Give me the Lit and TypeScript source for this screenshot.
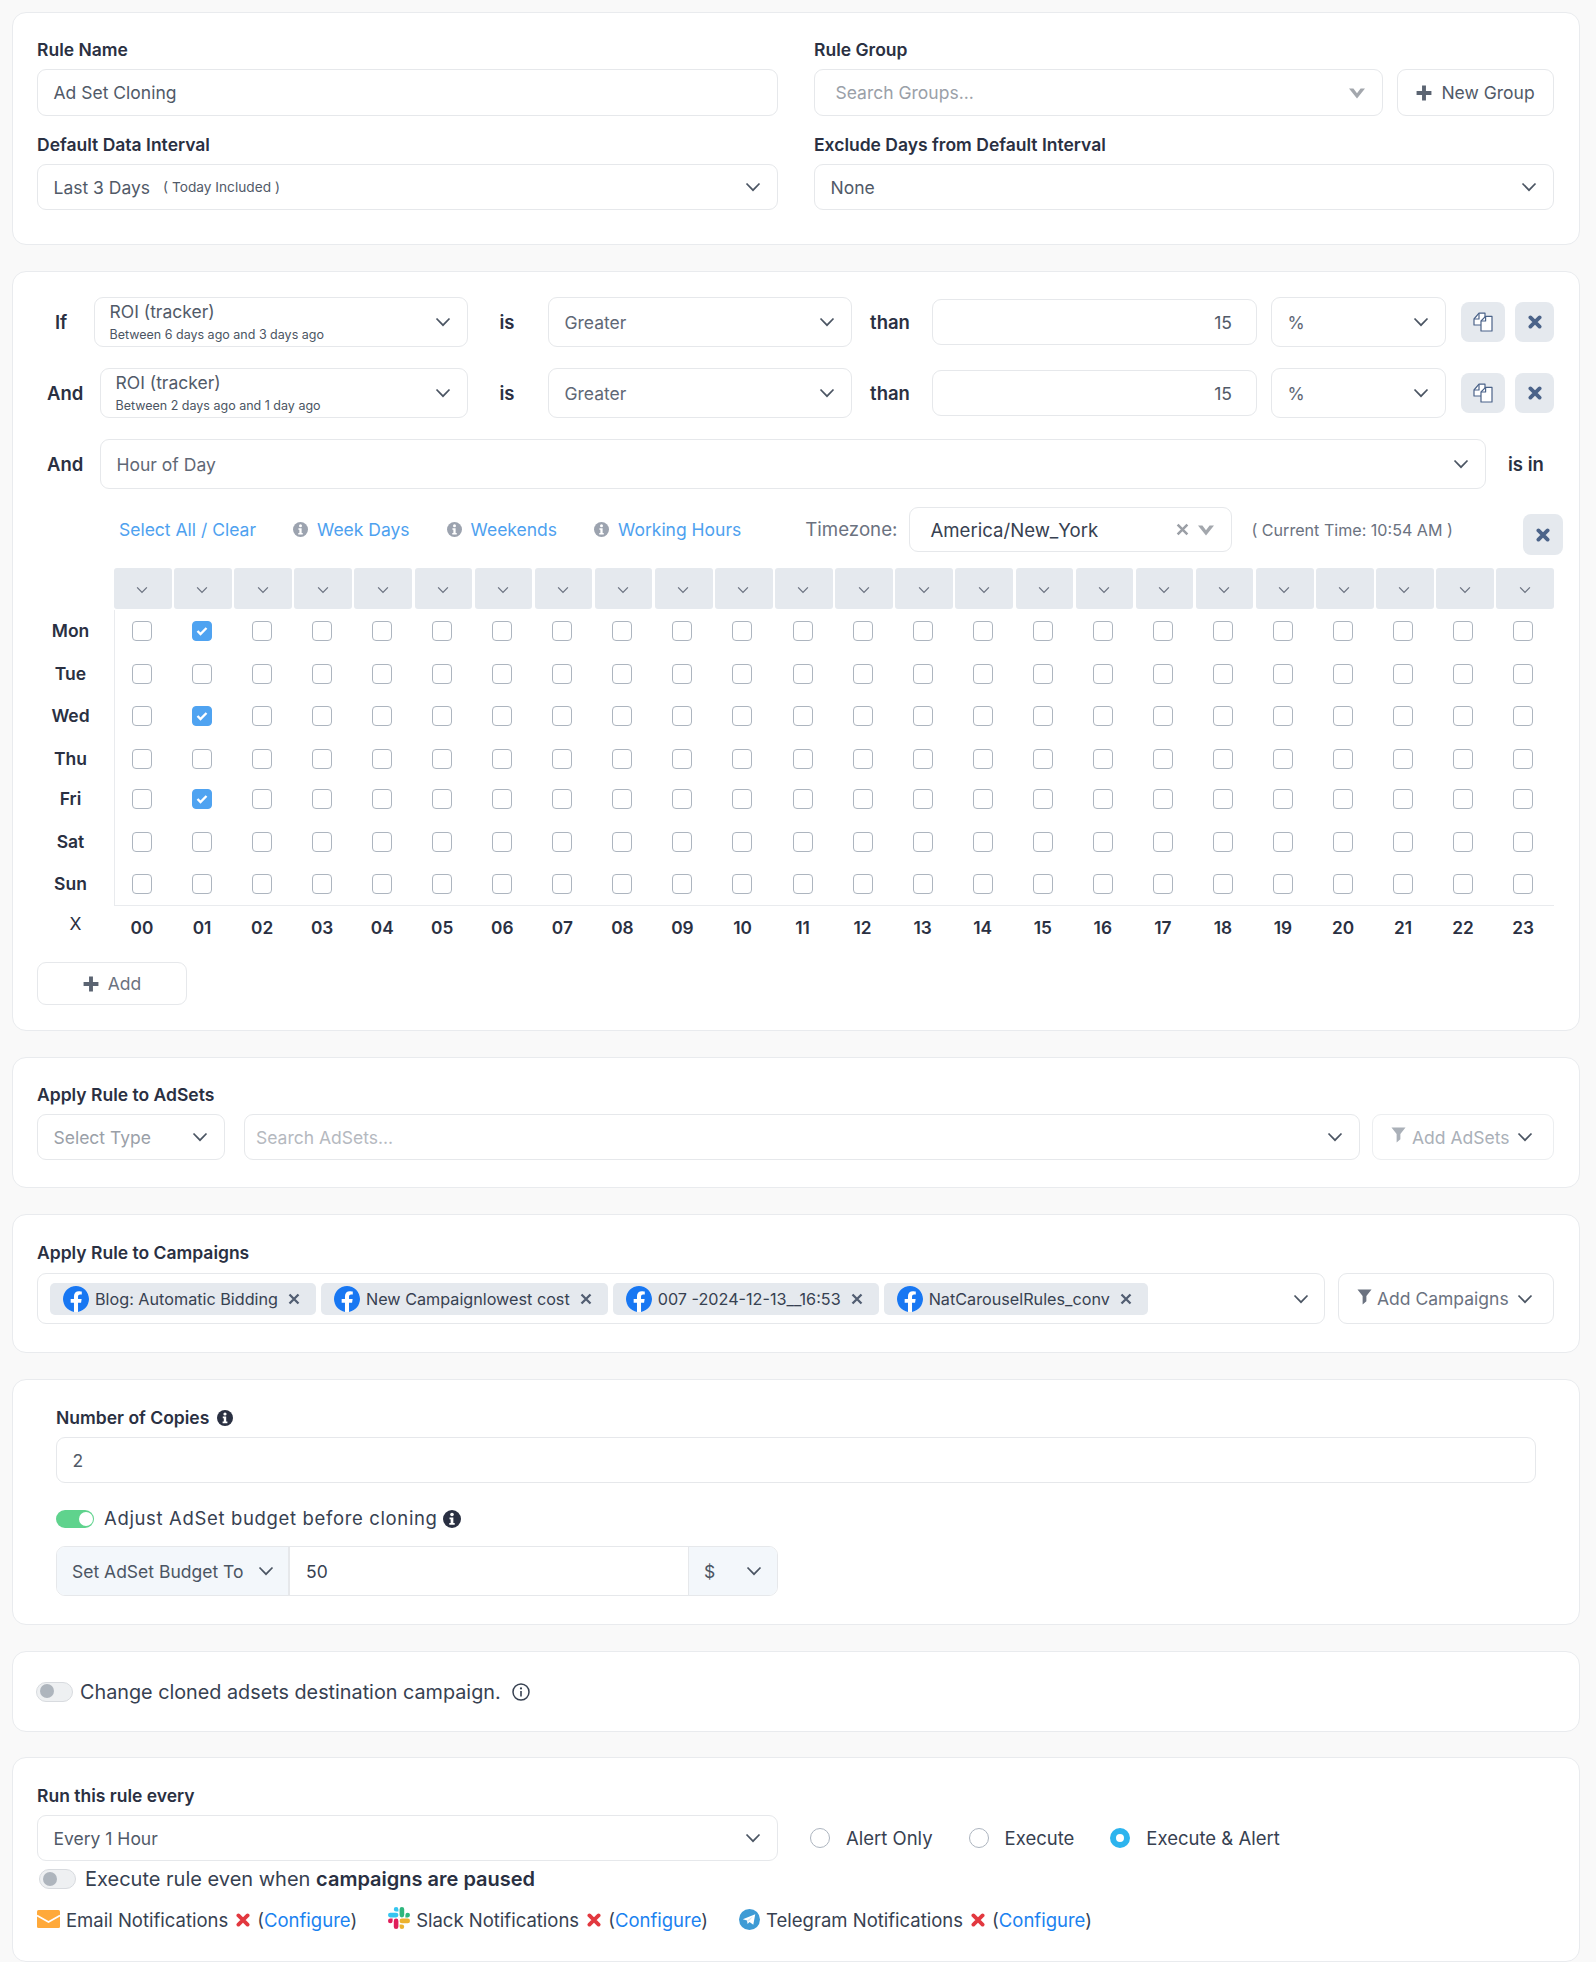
import { LitElement, html, css } from "lit";
import { customElement } from "lit/decorators.js";

const chev = (cls = "") => html`<svg class="chev ${cls}" viewBox="0 0 16 10"><path d="M1.5 1.5 8 8.2l6.5-6.7" fill="none" stroke="currentColor" stroke-width="1.7"/></svg>`;
const fatChev = () => html`<svg class="fat" viewBox="0 0 18 12"><path d="M1 1.5h4.4L9 6.2l3.6-4.7H17L9 11.5z" fill="currentColor"/></svg>`;
const plus = () => html`<svg class="plus" viewBox="0 0 14 14"><path d="M7 .5v13M.5 7h13" stroke="currentColor" stroke-width="3.4" fill="none"/></svg>`;
const info = (cls = "") => html`<svg class="info ${cls}" viewBox="0 0 16 16"><circle cx="8" cy="8" r="8" fill="currentColor"/><circle cx="8" cy="4" r="1.6" fill="#fff"/><path d="M5.8 6.6h3.4v5h1.2v1.6H5.6v-1.6h1.2V8.2h-1z" fill="#fff"/></svg>`;
const times = (cls = "") => html`<svg class="times ${cls}" viewBox="0 0 14 14"><path d="M2.4 2.4l9.2 9.2M11.6 2.4l-9.2 9.2" stroke="currentColor" stroke-width="3.8" stroke-linecap="round" fill="none"/></svg>`;
const thin = () => html`<svg class="thin" viewBox="0 0 12 12"><path d="M1.5 1.5l9 9M10.5 1.5l-9 9" stroke="currentColor" stroke-width="2.3" fill="none"/></svg>`;
const filter = () => html`<svg class="filter" viewBox="0 0 16 17"><path d="M.5.5h15L10 7.5V13l-4 3.5V7.5z" fill="currentColor"/></svg>`;
const copy = () => html`<svg class="copy" viewBox="0 0 20 20" fill="#fff" stroke="currentColor" stroke-width="1.2" stroke-linejoin="round"><path d="M1 7 6 1.2h6V13H1z"/><path d="M6 1.2V7H1" fill="none"/><path d="M8 9l4.6-4.6H19V19H8z"/><path d="M12.6 4.4V9H8" fill="none"/></svg>`;
const fb = () => html`<svg class="fb" viewBox="0 0 24 24"><circle cx="12" cy="12" r="12" fill="#fff"/><path fill="#1877f2" d="M24 12.073c0-6.627-5.373-12-12-12s-12 5.373-12 12c0 5.99 4.388 10.954 10.125 11.854v-8.385H7.078v-3.47h3.047V9.43c0-3.007 1.792-4.669 4.533-4.669 1.312 0 2.686.235 2.686.235v2.953H15.83c-1.491 0-1.956.925-1.956 1.874v2.25h3.328l-.532 3.47h-2.796v8.385C19.612 23.027 24 18.062 24 12.073z"/></svg>`;
const mail = () => html`<svg class="mail" viewBox="0 0 23 18"><rect width="23" height="18" rx="1.5" fill="#ffa93a"/><path d="M0 5.5 11.5 12 23 5.5" fill="none" stroke="#fff" stroke-width="1.8"/></svg>`;
const slack = () => html`<svg class="slack" viewBox="0 0 24 24">
  <path fill="#E01E5A" d="M5.042 15.165a2.528 2.528 0 0 1-2.52 2.523A2.528 2.528 0 0 1 0 15.165a2.527 2.527 0 0 1 2.522-2.52h2.52v2.52zM6.313 15.165a2.527 2.527 0 0 1 2.521-2.52 2.527 2.527 0 0 1 2.521 2.52v6.313A2.528 2.528 0 0 1 8.834 24a2.528 2.528 0 0 1-2.521-2.522v-6.313z"/>
  <path fill="#36C5F0" d="M8.834 5.042a2.528 2.528 0 0 1-2.521-2.52A2.528 2.528 0 0 1 8.834 0a2.528 2.528 0 0 1 2.521 2.522v2.52H8.834zM8.834 6.313a2.528 2.528 0 0 1 2.521 2.521 2.528 2.528 0 0 1-2.521 2.521H2.522A2.528 2.528 0 0 1 0 8.834a2.528 2.528 0 0 1 2.522-2.521h6.312z"/>
  <path fill="#2EB67D" d="M18.956 8.834a2.528 2.528 0 0 1 2.522-2.521A2.528 2.528 0 0 1 24 8.834a2.528 2.528 0 0 1-2.522 2.521h-2.522V8.834zM17.688 8.834a2.528 2.528 0 0 1-2.523 2.521 2.527 2.527 0 0 1-2.52-2.521V2.522A2.527 2.527 0 0 1 15.165 0a2.528 2.528 0 0 1 2.523 2.522v6.312z"/>
  <path fill="#ECB22E" d="M15.165 18.956a2.528 2.528 0 0 1 2.523 2.522A2.528 2.528 0 0 1 15.165 24a2.527 2.527 0 0 1-2.52-2.522v-2.522h2.52zM15.165 17.688a2.527 2.527 0 0 1-2.52-2.523 2.526 2.526 0 0 1 2.52-2.52h6.313A2.527 2.527 0 0 1 24 15.165a2.528 2.528 0 0 1-2.522 2.523h-6.313z"/></svg>`;
const tg = () => html`<svg class="tg" viewBox="0 0 22 22"><circle cx="11" cy="11" r="11" fill="#3e9bd5"/><path d="M4 10.8 17 5.6l-2 11-4-3-2 2-.6-3.6z" fill="#fff"/><path d="M8.4 12 15 7.6l-5 5.4z" fill="#cfe3f2"/></svg>`;

const HOURS = Array.from({ length: 24 }, (_, i) => String(i).padStart(2, "0"));
const DAYS = ["Mon", "Tue", "Wed", "Thu", "Fri", "Sat", "Sun"];
const CHECKED = new Set(["Mon-1", "Wed-1", "Fri-1"]);

@customElement("app-root")
export class AppRoot extends LitElement {
  static styles = css`
    :host { display: block; background: #f9f9f9; padding: 12px 16px 0 12px; font-family: Inter, "Liberation Sans", sans-serif; font-size: 17.5px; color: #4b5563; box-sizing: border-box; height: 1962px; overflow: hidden; }
    * { box-sizing: border-box; }
    .cards { display: flex; flex-direction: column; gap: 26px; }
    .card { background: #fff; border: 1px solid #e9ebee; border-radius: 14px; padding: 0 25px 0 24px; }
    .c1 { padding-top: 26px; height: 233px; }
    .c2 { padding-top: 25px; height: 760px; }
    .c3 { padding-top: 26px; height: 131px; }
    .c4 { padding-top: 27px; height: 139px; }
    .c5 { padding: 27px 43px 0; height: 246px; }
    .c6 { height: 81px; margin-bottom: -1px; display: flex; align-items: center; gap: 7px; }
    .c7 { padding-top: 27px; height: 205px; }
    .lbl { font-weight: 600; font-size: 17.5px; line-height: 22px; color: #2a3042; margin-bottom: 8px; display: flex; align-items: center; gap: 8px; }
    .c4 .lbl { margin-bottom: 9px; }
    .grid2 { display: grid; grid-template-columns: 741px 1fr; column-gap: 36px; row-gap: 18px; }
    .box { background: #fff; border: 1.5px solid #e6e8eb; border-radius: 9px; height: 46px; display: flex; align-items: center; padding: 0 16px 0 15.5px; color: #515a68; white-space: nowrap; flex: none; }
    .h47 { height: 47px; }
    .sp { margin-left: auto; }
    .chev { width: 16px; height: 10px; color: #4b5563; flex: none; margin-left: auto; }
    .fat { width: 18px; height: 12px; color: #a3a7ad; flex: none; }
    .plus { width: 16px; height: 16px; color: #5b6472; flex: none; }
    .times { width: 14px; height: 14px; color: #4b6389; flex: none; }
    .thin { width: 12px; height: 12px; color: #525e72; flex: none; }
    .info { width: 15px; height: 15px; color: #9ca3af; flex: none; }
    .info.dark { width: 16px; height: 16px; color: #2a3042; }
    .info.big { width: 18px; height: 18px; }
    .filter { width: 15px; height: 16px; flex: none; }
    .copy { width: 20px; height: 20px; color: #4b6389; }
    .fb { width: 26px; height: 26px; flex: none; }
    .mail { width: 23px; height: 18px; flex: none; margin-top: -3px; }
    .slack { width: 22px; height: 22px; flex: none; margin-top: -4px; }
    .tg { width: 21px; height: 21px; flex: none; margin-top: -1px; }
    .small { font-size: 13.7px; margin-left: 13px; }
    .ph { color: #9aa0a8; }
    .sph { margin-left: 5px; }
    .ph2 { color: #b5b9bf; }
    .flex-r { display: flex; gap: 14px; }
    .grow { flex: 1; min-width: 0; }
    .newg { width: 157px; height: 47px; justify-content: center; gap: 9px; padding: 0; }

    .rows { display: flex; flex-direction: column; gap: 21px; }
    .cond { display: flex; align-items: center; height: 50px; }
    .cl { font-weight: 600; font-size: 18.5px; color: #2a3042; flex: none; }
    .cl.if { width: 57px; padding-left: 18px; }
    .cl.and { width: 63px; padding-left: 10px; }
    .mid { width: 80px; padding-right: 2px; text-align: center; font-size: 18.5px; font-weight: 600; color: #2a3042; flex: none; }
    .mid.th { padding-right: 4px; }
    .tall { height: 50px; }
    .gr { color: #5f6876; }
    .two { display: flex; flex-direction: column; line-height: 1.2; gap: 5px; margin: -2px 0 0 -1px; }
    .two small { font-size: 12.5px; color: #4b5563; }
    .w304 { width: 304px; }
    .num { width: 325px; justify-content: flex-end; padding-right: 24px; margin-right: 14px; }
    .unit { width: 175px; margin-right: 15px; }
    .act { height: 40px; background: #e5e9ee; border-radius: 8px; display: flex; align-items: center; justify-content: center; flex: none; }
    .act.a { width: 44px; margin-right: 10px; }
    .act.b { width: 39px; }
    .isin { flex: none; width: 68px; padding-left: 22px; font-size: 18.5px; font-weight: 600; color: #2a3042; white-space: nowrap; }

    .tools { display: flex; align-items: center; height: 45px; margin: 18px 0 16px; color: #4499ee; }
    .tools .a { color: #4ea1ef; display: flex; align-items: center; gap: 9px; white-space: nowrap; }
    .tools .a1 { margin-left: 82px; }
    .tools .a2 { margin-left: 37px; }
    .tools .a3 { margin-left: 37px; }
    .tools .a4 { margin-left: 37px; }
    .tz { color: #6b7280; margin-left: 64px; font-size: 18.7px; }
    .tzs { width: 323px; height: 45px; margin-left: 12px; color: #374151; font-size: 18.6px; padding-left: 20px; gap: 0; }
    .tzs .thin { margin-left: auto; color: #9b9fa6; margin-right: 8px; width: 13px; height: 13px; }
    .cur { color: #6b7280; font-size: 16.1px; margin-left: 19px; white-space: nowrap; }
    .close { width: 40px; height: 41px; background: #e5e9ee; border-radius: 8px; display: flex; align-items: center; justify-content: center; align-self: flex-start; margin: 7px -9px 0 auto; flex: none; }

    .hdr { margin-left: 77px; width: 1440px; display: grid; grid-template-columns: repeat(24, 1fr); column-gap: 2.5px; height: 41px; }
    .hc { background: #e5e9ee; border-radius: 3px; display: flex; align-items: center; justify-content: center; }
    .hc .chev { width: 12px; height: 8px; color: #6b7280; margin: 2px 1px 0 0; }
    .matrix { display: flex; margin-top: 1px; }
    .days, .cells { display: grid; grid-template-rows: 43px 42px 43px 40px 43px 42px 43px; }
    .days { width: 77px; padding-right: 10px; text-align: center; font-weight: 600; color: #2a3042; line-height: 42px; }
    .cells { width: 1440px; border-left: 1.5px solid #e9ebee; border-bottom: 1.5px solid #e9ebee; grid-template-columns: repeat(24, 60.05px); padding-left: 17px; height: 296px; }
    .cb { width: 20px; height: 20px; border: 1.4px solid #adb5bf; border-radius: 4px; margin-top: 11px; background: #fff; display: flex; align-items: center; justify-content: center; }
    .cb.on { background: #4fa3f1; border-color: #4fa3f1; }
    .cb svg { width: 12px; height: 10px; }
    .hours { display: flex; height: 44px; }
    .x { width: 77px; text-align: center; line-height: 36px; color: #2a3042; font-size: 17.5px; }
    .hrs { display: grid; grid-template-columns: repeat(24, 60.05px); font-weight: 600; color: #2a3042; font-size: 17.3px; line-height: 44px; text-align: center; margin-left: -2px; }
    .add { width: 150px; height: 43px; margin-top: 12px; justify-content: center; gap: 9px; padding: 0; color: #6b7280; }

    .c3row { display: flex; }
    .wtype { width: 188px; margin-right: 19px; }
    .wsearch { width: 1116px; margin-right: 12px; padding-left: 11px; }
    .wadd { width: 182px; border-color: #eceef0; padding: 0 16px 0 18px; gap: 6px; color: #aab0b8; }
    .wadd .chev, .wadd2 .chev { color: #4b5563; margin-right: 4px; }
    .chips { width: 1288px; height: 51px; padding: 0 15px 0 12px; gap: 5px; margin-right: 13px; }
    .chip { background: #e5e9ee; border-radius: 5px; height: 32px; display: flex; align-items: center; padding: 0 16px 0 13px; font-size: 16.2px; color: #374151; gap: 6px; flex: none; }
    .chip .thin { margin-left: 4px; }
    .wadd2 { width: 216px; height: 51px; padding: 0 16px 0 18px; gap: 5px; color: #6b7280; }
    .wadd2 .filter, .wadd .filter { margin-top: -4px; }

    .sw { display: flex; align-items: center; gap: 10px; }
    .t { border-radius: 10px; flex: none; position: relative; }
    .t.on { width: 38px; height: 18px; background: #5fd38d; }
    .t.on::after { content: ""; position: absolute; right: 1.5px; top: 2px; width: 14px; height: 14px; background: #fff; border-radius: 50%; }
    .t.off { width: 37px; height: 20px; background: #eef0f2; border: 1.5px solid #d8dbdf; }
    .t.off::after { content: ""; position: absolute; left: 2.5px; top: 1.5px; width: 14px; height: 14px; background: #aeb5bd; border-radius: 50%; }
    .adj { margin-top: 27px; height: 18px; color: #374151; letter-spacing: .65px; font-size: 18.5px; white-space: nowrap; }
    .adj span { margin-top: -2px; }
    .adj .info { margin-left: -5px; }
    .group { margin-top: 18px; width: 722px; height: 50px; display: flex; border: 1.5px solid #e6e8eb; border-radius: 9px; overflow: hidden; }
    .g1 { width: 233px; background: #f3f7fb; display: flex; align-items: center; padding: 0 14px 0 15px; border-right: 2px solid #e6e8eb; white-space: nowrap; }
    .g2 { flex: 1; display: flex; align-items: center; padding-left: 16px; color: #374151; }
    .g3 { width: 89px; background: #f3f7fb; display: flex; align-items: center; padding: 0 15px 0 15px; border-left: 1.5px solid #e6e8eb; }
    .c6 .t { margin-left: -1px; }
    .c6 .txt { color: #374151; font-size: 19.8px; white-space: nowrap; }
    .c6 .ic { width: 18px; height: 18px; margin-left: 4px; }

    .runrow { display: flex; align-items: center; }
    .runrow .box { width: 741px; }
    .rad { width: 20px; height: 20px; border-radius: 50%; border: 1.4px solid #adb5bf; flex: none; }
    .rad.on { border: 6px solid #2db4ee; background: #fff; }
    .rl { color: #374151; white-space: nowrap; margin-left: 16px; font-size: 18.5px; }
    .r1 { margin-left: 32px; }
    .r2 { margin-left: 36px; }
    .r3 { margin-left: 36px; }
    .ex { margin-top: 8px; height: 20px; margin-left: 2px; color: #374151; gap: 9px; }
    .ex b { color: #2a3042; font-weight: 600; }
    .ex .txt { font-size: 20px; white-space: nowrap; }
    .noti { display: flex; align-items: center; margin-top: 20px; height: 22px; color: #374151; font-size: 18.5px; white-space: nowrap; }
    .noti .it { display: flex; align-items: center; gap: 6px; }
    .noti .it + .it { margin-left: 31px; }
    .noti .times { width: 14px; height: 14px; color: #e2383f; margin: 0 1px 0 2px; }
    .noti a { color: #1a82f0; }
  `;

  private rowCond(label: string, cls: string, sub: string) {
    return html`<div class="cond">
      <div class="cl ${cls}">${label}</div>
      <div class="box tall grow"><div class="two"><span>ROI (tracker)</span><small>${sub}</small></div>${chev()}</div>
      <div class="mid">is</div>
      <div class="box tall w304 gr">Greater${chev()}</div>
      <div class="mid th">than</div>
      <div class="box num">15</div>
      <div class="box tall unit gr">%${chev()}</div>
      <div class="act a">${copy()}</div>
      <div class="act b">${times()}</div>
    </div>`;
  }

  render() {
    const chips = ["Blog: Automatic Bidding", "New Campaignlowest cost", "007 -2024-12-13__16:53", "NatCarouselRules_conv"];
    return html`<div class="cards">
      <section class="card c1">
        <div class="grid2">
          <div><div class="lbl">Rule Name</div><div class="box h47">Ad Set Cloning</div></div>
          <div><div class="lbl">Rule Group</div>
            <div class="flex-r"><div class="box h47 grow"><span class="ph sph">Search Groups...</span><span class="sp"></span>${fatChev()}</div>
            <div class="box newg">${plus()}<span>New Group</span></div></div></div>
          <div><div class="lbl">Default Data Interval</div><div class="box">Last 3 Days<span class="small">( Today Included )</span>${chev()}</div></div>
          <div><div class="lbl">Exclude Days from Default Interval</div><div class="box">None${chev()}</div></div>
        </div>
      </section>

      <section class="card c2">
        <div class="rows">
          ${this.rowCond("If", "if", "Between 6 days ago and 3 days ago")}
          ${this.rowCond("And", "and", "Between 2 days ago and 1 day ago")}
          <div class="cond"><div class="cl and">And</div><div class="box tall grow gr">Hour of Day${chev()}</div><div class="isin">is in</div></div>
        </div>
        <div class="tools">
          <div class="a a1">Select All / Clear</div>
          <div class="a a2">${info()}Week Days</div>
          <div class="a a3">${info()}Weekends</div>
          <div class="a a4">${info()}Working Hours</div>
          <div class="tz">Timezone:</div>
          <div class="box tzs">America/New_York${thin()}${fatChev()}</div>
          <div class="cur">( Current Time: 10:54 AM )</div>
          <div class="close">${times()}</div>
        </div>
        <div class="hdr">${HOURS.map(() => html`<div class="hc">${chev()}</div>`)}</div>
        <div class="matrix">
          <div class="days">${DAYS.map((d) => html`<div>${d}</div>`)}</div>
          <div class="cells">
            ${DAYS.map((d) => HOURS.map((_, i) => CHECKED.has(`${d}-${i}`)
              ? html`<div class="cb on"><svg viewBox="0 0 12 10"><path d="M1.5 5l3 3 6-6" stroke="#fff" stroke-width="2.4" fill="none"/></svg></div>`
              : html`<div class="cb"></div>`))}
          </div>
        </div>
        <div class="hours"><div class="x">X</div><div class="hrs">${HOURS.map((h) => html`<div>${h}</div>`)}</div></div>
        <div class="box add">${plus()}<span>Add</span></div>
      </section>

      <section class="card c3">
        <div class="lbl">Apply Rule to AdSets</div>
        <div class="c3row">
          <div class="box wtype"><span class="ph">Select Type</span>${chev()}</div>
          <div class="box wsearch"><span class="ph2">Search AdSets...</span>${chev()}</div>
          <div class="box wadd">${filter()}<span>Add AdSets</span>${chev()}</div>
        </div>
      </section>

      <section class="card c4">
        <div class="lbl">Apply Rule to Campaigns</div>
        <div class="c3row">
          <div class="box chips">${chips.map((c) => html`<div class="chip">${fb()}<span>${c}</span>${thin()}</div>`)}${chev()}</div>
          <div class="box wadd2">${filter()}<span>Add Campaigns</span>${chev()}</div>
        </div>
      </section>

      <section class="card c5">
        <div class="lbl">Number of Copies ${info("dark")}</div>
        <div class="box">2</div>
        <div class="sw adj"><div class="t on"></div><span>Adjust AdSet budget before cloning</span>${info("dark big")}</div>
        <div class="group">
          <div class="g1">Set AdSet Budget To${chev()}</div>
          <div class="g2">50</div>
          <div class="g3">$${chev()}</div>
        </div>
      </section>

      <section class="card c6">
        <div class="t off"></div>
        <span class="txt">Change cloned adsets destination campaign.</span>
        <svg class="ic" viewBox="0 0 18 18"><circle cx="9" cy="9" r="8" fill="none" stroke="#374151" stroke-width="1.5"/><circle cx="9" cy="5.4" r="1.1" fill="#374151"/><path d="M9 8v5.5" stroke="#374151" stroke-width="1.6"/></svg>
      </section>

      <section class="card c7">
        <div class="lbl">Run this rule every</div>
        <div class="runrow">
          <div class="box">Every 1 Hour${chev()}</div>
          <div class="rad r1"></div><span class="rl">Alert Only</span>
          <div class="rad r2"></div><span class="rl">Execute</span>
          <div class="rad on r3"></div><span class="rl">Execute &amp; Alert</span>
        </div>
        <div class="sw ex"><div class="t off"></div><span class="txt">Execute rule even when <b>campaigns are paused</b></span></div>
        <div class="noti">
          <div class="it">${mail()}<span>Email Notifications</span>${times()}<span>(<a>Configure</a>)</span></div>
          <div class="it">${slack()}<span>Slack Notifications</span>${times()}<span>(<a>Configure</a>)</span></div>
          <div class="it">${tg()}<span>Telegram Notifications</span>${times()}<span>(<a>Configure</a>)</span></div>
        </div>
      </section>
    </div>`;
  }
}
